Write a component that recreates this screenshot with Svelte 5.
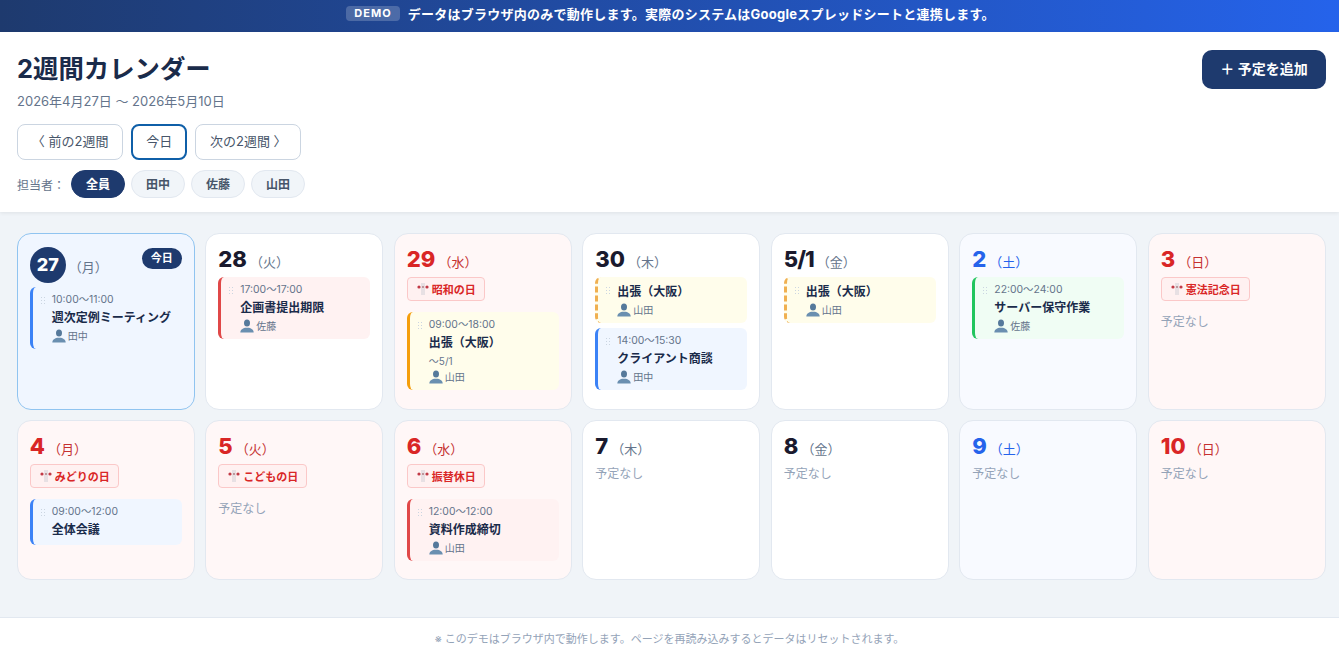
<script>
	const c = { blue: 'blue', red: 'red', amber: 'amber', green: 'green' };

	const days = [
		{ d: '27', w: '月', today: true, events: [{ time: '10:00〜11:00', title: '週次定例ミーティング', who: '田中', color: c.blue }] },
		{ d: '28', w: '火', events: [{ time: '17:00〜17:00', title: '企画書提出期限', who: '佐藤', color: c.red }] },
		{ d: '29', w: '水', kind: 'holiday', holiday: '昭和の日', events: [{ time: '09:00〜18:00', title: '出張（大阪）', until: '〜5/1', who: '山田', color: c.amber }] },
		{
			d: '30', w: '木', events: [
				{ title: '出張（大阪）', who: '山田', color: c.amber, cont: true },
				{ time: '14:00〜15:30', title: 'クライアント商談', who: '田中', color: c.blue }
			]
		},
		{ d: '5/1', w: '金', events: [{ title: '出張（大阪）', who: '山田', color: c.amber, cont: true }] },
		{ d: '2', w: '土', kind: 'sat', events: [{ time: '22:00〜24:00', title: 'サーバー保守作業', who: '佐藤', color: c.green }] },
		{ d: '3', w: '日', kind: 'holiday', holiday: '憲法記念日', events: [] },
		{ d: '4', w: '月', kind: 'holiday', holiday: 'みどりの日', events: [{ time: '09:00〜12:00', title: '全体会議', color: c.blue }] },
		{ d: '5', w: '火', kind: 'holiday', holiday: 'こどもの日', events: [] },
		{ d: '6', w: '水', kind: 'holiday', holiday: '振替休日', events: [{ time: '12:00〜12:00', title: '資料作成締切', who: '山田', color: c.red }] },
		{ d: '7', w: '木', events: [] },
		{ d: '8', w: '金', events: [] },
		{ d: '9', w: '土', kind: 'sat', events: [] },
		{ d: '10', w: '日', kind: 'holiday', events: [] }
	];

	const people = ['全員', '田中', '佐藤', '山田'];
	let active = $state('全員');
</script>

<div class="banner">
	<span class="demo">DEMO</span>
	<span>データはブラウザ内のみで動作します。実際のシステムはGoogleスプレッドシートと連携します。</span>
</div>

<header>
	<div class="head-left">
		<h1>2週間カレンダー</h1>
		<p class="range">2026年4月27日 〜 2026年5月10日</p>
		<div class="nav">
			<button>〈 前の2週間</button>
			<button class="now">今日</button>
			<button>次の2週間 〉</button>
		</div>
		<div class="filter">
			<span class="filter-label">担当者：</span>
			{#each people as p}
				<button class="chip" class:on={active === p} onclick={() => (active = p)}>{p}</button>
			{/each}
		</div>
	</div>
	<button class="add">＋ 予定を追加</button>
</header>

<main>
	{#each days as day}
		<section class="day {day.kind ?? ''}" class:today={day.today}>
			<div class="day-head">
				<span class="num" class:narrow={day.d.includes('/')}>{day.d}</span>
				<span class="wd">（{day.w}）</span>
				{#if day.today}<span class="today-tag">今日</span>{/if}
			</div>
			{#if day.holiday}
				<div class="holiday-tag">
					<svg class="flag" viewBox="0 0 14 14" width="14" height="14" aria-hidden="true">
						<path d="M6 1v12M8 1v12" stroke="#c4c8d0" stroke-width="0.8" />
						<circle cx="3" cy="5" r="1.6" fill="#c23a46" />
						<circle cx="11" cy="5" r="1.6" fill="#c23a46" />
						<circle cx="7" cy="5" r="0.9" fill="#a9777d" />
					</svg>
					{day.holiday}
				</div>
			{/if}
			{#each day.events as ev}
				<div class="event {ev.color}" class:cont={ev.cont}>
					<span class="grip"></span>
					{#if ev.time}<div class="time">{ev.time}</div>{/if}
					<div class="title">{ev.title}</div>
					{#if ev.until}<div class="until">{ev.until}</div>{/if}
					{#if ev.who}
						<div class="who">
							<svg viewBox="0 0 14 14" width="14" height="14" aria-hidden="true">
								<ellipse cx="7" cy="4" rx="3" ry="3.6" fill="#55799b" />
								<path d="M0.3 13.600c0-3 3-4.300 4.700-4.800h4c1.700.5 4.700 1.800 4.700 4.800z" fill="#6a8fb0" />
							</svg>
							{ev.who}
						</div>
					{/if}
				</div>
			{/each}
			{#if day.events.length === 0}<p class="none">予定なし</p>{/if}
		</section>
	{/each}
</main>

<footer>※ このデモはブラウザ内で動作します。ページを再読み込みするとデータはリセットされます。</footer>

<style>
	:global(body) {
		margin: 0;
		background: #f0f4f8;
		color: #1a1a2e;
		font-family: Inter, "Noto Sans CJK JP", sans-serif;
	}

	button {
		font-family: inherit;
		cursor: pointer;
	}

	.banner {
		height: 32px;
		box-sizing: border-box;
		padding: 0 0 6px 2px;
		display: flex;
		align-items: center;
		justify-content: center;
		gap: 8px;
		background: linear-gradient(90deg, #1e3a6e, #2563eb);
		color: white;
		font-size: 13px;
		font-weight: 700;
		letter-spacing: 0.25px;
	}

	.demo {
		background: rgba(255, 255, 255, 0.2);
		border-radius: 4px;
		padding: 0 8px;
		height: 15px;
		line-height: 15px;
		font-size: 11px;
		letter-spacing: 1px;
	}

	header {
		background: white;
		height: 180px;
		box-sizing: border-box;
		padding: 18px 13px 0 17px;
		display: flex;
		justify-content: space-between;
		align-items: flex-start;
		box-shadow: 0 1px 4px rgba(0, 0, 0, 0.08);
	}

	h1 {
		margin: 0;
		font-size: 25.4px;
		line-height: 38px;
		font-weight: 700;
		color: #1a2b4a;
	}

	.range {
		margin: 4px 0 0;
		font-size: 13px;
		line-height: 18px;
		color: #64748b;
	}

	.nav {
		display: flex;
		gap: 8px;
		margin-top: 14px;
	}

	.nav button {
		height: 36px;
		box-sizing: border-box;
		padding: 0 13.8px 4px;
		background: white;
		border: 1px solid #cbd5e1;
		border-radius: 8px;
		font-size: 13px;
		color: #475569;
	}

	.nav .now {
		width: 56px;
		padding: 0 0 4px;
		border: 2px solid #0f5fa8;
	}

	.filter {
		display: flex;
		align-items: center;
		gap: 6px;
		margin-top: 10px;
	}

	.filter-label {
		font-size: 12px;
		color: #64748b;
		width: 48px;
	}

	.chip {
		width: 54px;
		height: 28px;
		padding: 0 0 2px;
		border: 1px solid #e2e8f0;
		border-radius: 14px;
		background: #f1f5f9;
		color: #475569;
		font-size: 12px;
		font-weight: 700;
	}

	.chip.on {
		background: #1e3a6e;
		border-color: #1e3a6e;
		color: white;
	}

	.add {
		width: 124px;
		height: 39px;
		border: none;
		border-radius: 10px;
		background: #1e3a6e;
		color: white;
		font-size: 14px;
		font-weight: 700;
		padding: 0 0 4px;
	}

	main {
		display: grid;
		grid-template-columns: repeat(7, 1fr);
		grid-template-rows: 177px 160px;
		gap: 10px 10.5px;
		padding: 21px 13.2px 37px 16.8px;
	}

	.day {
		box-sizing: border-box;
		min-width: 0;
		background: white;
		border: 1px solid #e2e8f0;
		border-radius: 14px;
		padding: 12px 12px 0 12px;
	}

	.day.holiday {
		background: #fff7f7;
	}

	.day.sat {
		background: #f8faff;
	}

	.day.today {
		background: #f0f6ff;
		border-color: #90c4f0;
	}

	.day-head {
		display: flex;
		align-items: center;
		height: 26px;
	}

	.today .day-head {
		height: 36px;
		margin-top: 1px;
		margin-bottom: -1px;
		position: relative;
	}

	.num {
		font-size: 22px;
		font-weight: 800;
		line-height: 26px;
		color: #1a1a2e;
	}

	.num.narrow {
		letter-spacing: -1px;
	}

	.wd {
		font-size: 13px;
		color: #64748b;
		margin-left: 3px;
		padding-top: 5px;
	}

	.holiday .num {
		color: #d92626;
	}

	.holiday .wd {
		color: #c53030;
	}

	.sat .num,
	.sat .wd {
		color: #2563eb;
	}

	.today .num {
		width: 36px;
		height: 36px;
		line-height: 36px;
		text-align: center;
		border-radius: 50%;
		background: #1e3a6e;
		color: white;
		font-size: 18px;
	}

	.today .wd {
		padding-top: 2px;
	}

	.today-tag {
		position: absolute;
		top: 1px;
		right: 0;
		height: 21px;
		width: 40px;
		line-height: 21px;
		text-align: center;
		border-radius: 11px;
		background: #1e3a6e;
		color: white;
		font-size: 11px;
		font-weight: 700;
	}

	.holiday-tag {
		display: inline-flex;
		align-items: center;
		gap: 2px;
		height: 24px;
		box-sizing: border-box;
		margin-top: 5px;
		padding: 0 8px;
		background: #fff1f1;
		border: 1px solid #fbc8c8;
		border-radius: 4px;
		color: #d92626;
		font-size: 11px;
		font-weight: 700;
	}

	.holiday-tag + .event {
		margin-top: 11px;
	}

	.event {
		position: relative;
		box-sizing: border-box;
		margin-top: 5px;
		padding: 5px 8px 5px 19px;
		border-left: 3px solid;
		border-radius: 6px;
	}

	.event.blue {
		background: #f0f6ff;
		border-color: #3b82f6;
	}

	.event.red {
		background: #fff2f2;
		border-color: #e04848;
	}

	.event.amber {
		background: #fffdeb;
		border-color: #f59e0b;
	}

	.event.green {
		background: #f0fdf4;
		border-color: #22c55e;
	}

	.event.cont {
		border-left-style: dashed;
		border-left-color: #f0b050;
	}

	.today .event {
		background: transparent;
	}

	.grip {
		position: absolute;
		left: 7px;
		top: 9px;
		width: 6px;
		height: 9px;
		background-image: radial-gradient(circle, #cbd5e1 1px, transparent 1px);
		background-size: 3px 3px;
	}

	.time {
		font-size: 10.4px;
		line-height: 16px;
		color: #64748b;
	}

	.title {
		font-size: 12px;
		font-weight: 700;
		line-height: 20px;
		color: #1a2b4a;
		white-space: nowrap;
	}

	.until {
		font-size: 10px;
		line-height: 16px;
		color: #64748b;
	}

	.who {
		display: flex;
		align-items: center;
		gap: 2px;
		font-size: 10px;
		line-height: 16px;
		color: #64748b;
	}

	.none {
		margin: 6px 0 0;
		font-size: 12px;
		line-height: 18px;
		color: #94a3b8;
	}

	.holiday-tag + .none {
		margin-top: 12px;
	}

	footer {
		background: white;
		border-top: 1px solid #e2e8f0;
		height: 43px;
		box-sizing: border-box;
		line-height: 42px;
		text-align: center;
		font-size: 11px;
		color: #94a3b8;
	}
</style>
